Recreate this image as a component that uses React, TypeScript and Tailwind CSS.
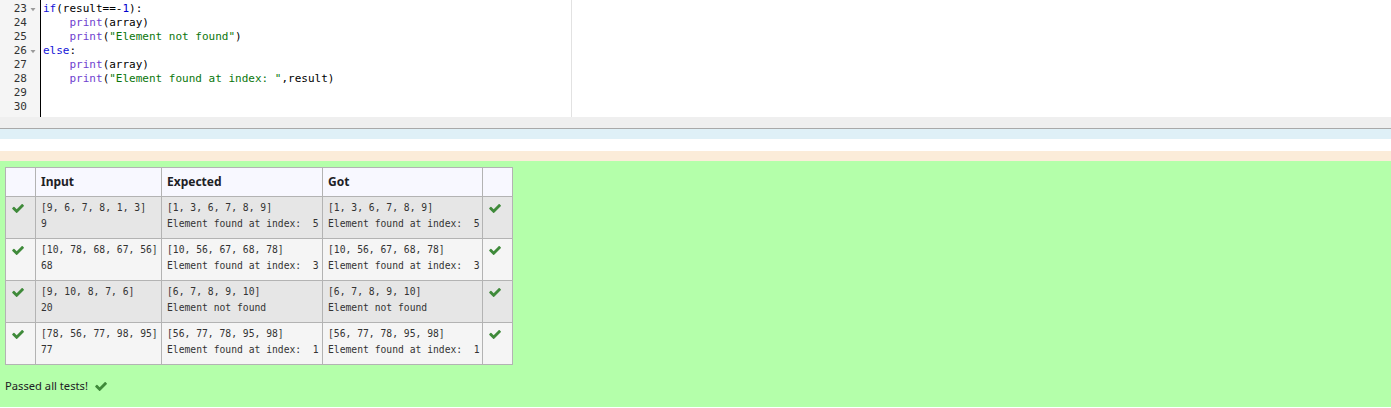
import React from "react";

const mono = { fontFamily: '"DejaVu Sans Mono", "Liberation Mono", monospace' };
const sans = { fontFamily: '"Noto Sans", "Open Sans", Arial, sans-serif' };

const K = ({ c }: { c: string }) => <span className="text-[#1414d8]">{c}</span>;
const F = ({ c }: { c: string }) => <span className="text-[#6f3fcf]">{c}</span>;
const S = ({ c }: { c: string }) => <span className="text-[#0a760c]">{c}</span>;
const N = ({ c }: { c: string }) => <span className="text-[#0000cd]">{c}</span>;

const codeLines: { n: number; fold?: boolean; el: React.ReactNode }[] = [
  {
    n: 23,
    fold: true,
    el: (
      <>
        <K c="if" />
        {"(result==-"}
        <N c="1" />
        {"):"}
      </>
    ),
  },
  {
    n: 24,
    el: (
      <>
        {"    "}
        <F c="print" />
        {"(array)"}
      </>
    ),
  },
  {
    n: 25,
    el: (
      <>
        {"    "}
        <F c="print" />
        {"("}
        <S c={'"Element not found"'} />
        {")"}
      </>
    ),
  },
  {
    n: 26,
    fold: true,
    el: (
      <>
        <K c="else" />
        {":"}
      </>
    ),
  },
  {
    n: 27,
    el: (
      <>
        {"    "}
        <F c="print" />
        {"(array)"}
      </>
    ),
  },
  {
    n: 28,
    el: (
      <>
        {"    "}
        <F c="print" />
        {"("}
        <S c={'"Element found at index: "'} />
        {",result)"}
      </>
    ),
  },
  { n: 29, el: <>{""}</> },
  { n: 30, el: <>{""}</> },
];

const rows = [
  {
    input: ["[9, 6, 7, 8, 1, 3]", "9"],
    exp: ["[1, 3, 6, 7, 8, 9]", "Element found at index:  5"],
  },
  {
    input: ["[10, 78, 68, 67, 56]", "68"],
    exp: ["[10, 56, 67, 68, 78]", "Element found at index:  3"],
  },
  {
    input: ["[9, 10, 8, 7, 6]", "20"],
    exp: ["[6, 7, 8, 9, 10]", "Element not found"],
  },
  {
    input: ["[78, 56, 77, 98, 95]", "77"],
    exp: ["[56, 77, 78, 95, 98]", "Element found at index:  1"],
  },
];

const Check = () => (
  <svg width="12" height="9" viewBox="100 360 1580 1150" className="block">
    <path
      fill="#3f8a3a"
      d="M1671 566q0 40-28 68l-724 724-136 136q-28 28-68 28t-68-28l-136-136-362-362q-28-28-28-68t28-68l136-136q28-28 68-28t68 28l294 295 656-657q28-28 68-28t68 28l136 136q28 28 28 68z"
    />
  </svg>
);

export default function App() {
  return (
    <div className="w-[1391px] h-[408px] bg-white overflow-hidden">
      {/* Editor */}
      <div className="h-[117px] flex overflow-hidden bg-white">
        <div
          className="w-[40px] shrink-0 bg-[#f5f5f5] text-[#333] text-[11px] leading-[14px] pt-[2px]"
          style={mono}
        >
          {codeLines.map((l) => (
            <div key={l.n} className="h-[14px] flex items-center justify-end pr-[4px]">
              <span className="pr-[3px]">{l.n}</span>
              <span className="w-[6px] flex items-center justify-center">
                {l.fold ? (
                  <svg width="6" height="5" viewBox="0 0 6 5">
                    <path d="M0.5 1 L5.5 1 L3 4.2 Z" fill="#9a9a9a" />
                  </svg>
                ) : null}
              </span>
            </div>
          ))}
        </div>
        <div className="w-px shrink-0 bg-black" />
        <div className="flex-1 relative">
          <div className="absolute top-0 bottom-0 left-[530px] w-px bg-[#e2e2e2]" />
          <div
            className="relative pt-[2px] pl-[2px] text-[11px] leading-[14px] text-black whitespace-pre"
            style={mono}
          >
            {codeLines.map((l) => (
              <div key={l.n} className="h-[14px]">
                {l.el}
              </div>
            ))}
          </div>
        </div>
      </div>
      <div className="h-[11px] bg-[#efefef]" />
      <div className="h-px bg-[#a9a9a9]" />
      <div className="h-[10px] bg-[#dff0f7]" />
      <div className="h-[12px] bg-white" />
      <div className="h-[10px] bg-[#fbecd9]" />

      {/* Results */}
      <div className="h-[246px] bg-[#b4ffaa] pt-[6px] pl-[5px]">
        <div
          className="grid grid-cols-[30px_126px_161px_160px_30px] w-[508px] border-l border-t border-[#b3b3b3]"
          style={sans}
        >
          {["", "Input", "Expected", "Got", ""].map((h, i) => (
            <div
              key={i}
              className="h-[29px] bg-[#f8f8ff] border-r border-b border-[#b3b3b3] flex items-center pl-[5px] font-bold text-[12px] text-[#1d2125]"
            >
              {h}
            </div>
          ))}
          {rows.map((r, idx) => {
            const bg = idx % 2 === 0 ? "bg-[#e6e6e6]" : "bg-[#f5f5f5]";
            return (
              <React.Fragment key={idx}>
                <div className={`h-[42px] border-r border-b border-[#b3b3b3] pl-[6px] pt-[7px] ${bg}`}>
                  <Check />
                </div>
                {[r.input, r.exp, r.exp].map((cell, j) => (
                  <div
                    key={j}
                    className={`h-[42px] border-r border-b border-[#b3b3b3] pl-[5px] pt-[3px] text-[9.7px] leading-[16px] text-[#333] whitespace-pre ${bg}`}
                    style={mono}
                  >
                    <div>{cell[0]}</div>
                    <div>{cell[1]}</div>
                  </div>
                ))}
                <div className={`h-[42px] border-r border-b border-[#b3b3b3] pl-[6px] pt-[7px] ${bg}`}>
                  <Check />
                </div>
              </React.Fragment>
            );
          })}
        </div>
        <div className="mt-[13px] flex items-center gap-[7px] text-[11.2px] leading-[16px] text-[#1d2125]" style={sans}>
          <span>Passed all tests!</span>
          <Check />
        </div>
      </div>
    </div>
  );
}
